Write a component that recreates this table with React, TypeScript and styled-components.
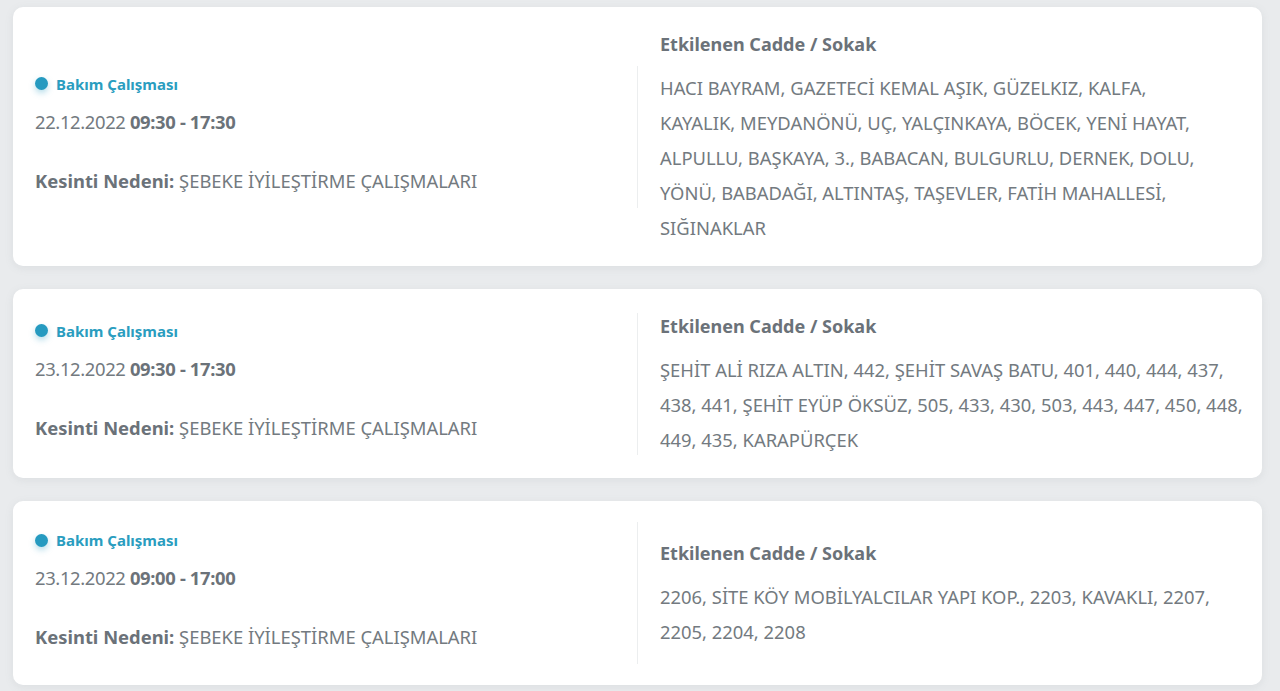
import React from "react";
import styled, { createGlobalStyle } from "styled-components";

const GlobalStyle = createGlobalStyle`
  html, body {
    margin: 0;
    padding: 0;
    background: #e9ebed;
  }
  body {
    font-family: "Noto Sans", "Open Sans", sans-serif;
    color: #737a80;
  }
`;

const Page = styled.div`
  display: flex;
  flex-direction: column;
  gap: 23px;
  padding: 7px 18px 10px 13px;
`;

const Card = styled.div`
  display: flex;
  align-items: center;
  background: #ffffff;
  border-radius: 10px;
  box-shadow: 0 2px 8px rgba(120, 130, 140, 0.12);
  padding: 21px 20px 21px 0;
`;

const Left = styled.div`
  width: 602px;
  flex-shrink: 0;
  padding: 8px 0 15px 22px;
  border-right: 1px solid #eceeef;
  display: flex;
  flex-direction: column;
`;

const Tag = styled.div`
  display: flex;
  align-items: center;
  gap: 8px;
  height: 20px;
  font-size: 15px;
  font-weight: 700;
  color: #2a9dbf;
  margin-bottom: 16px;
`;

const Dot = styled.span`
  width: 13px;
  height: 13px;
  border-radius: 50%;
  background: #259ac0;
  box-shadow: 0 3px 6px rgba(37, 154, 192, 0.35);
`;

const Strong = styled.b`
  font-weight: 700;
  color: #6b7279;
`;

const TextLine = styled.div<{ $gapAfter?: number; $tight?: boolean }>`
  font-size: 18.4px;
  line-height: 24px;
  color: #737a80;
  white-space: nowrap;
  letter-spacing: ${(p) => (p.$tight ? "-0.35px" : "0")};
  margin-bottom: ${(p) => p.$gapAfter ?? 0}px;
`;

const Right = styled.div`
  flex: 1;
  padding: 4px 0 0 22px;
  min-width: 0;
`;

const Title = styled.div`
  font-size: 18px;
  line-height: 24px;
  font-weight: 700;
  color: #6b7279;
  margin-bottom: 14px;
`;

const StreetLine = styled.div`
  font-size: 18.4px;
  line-height: 35px;
  color: #737a80;
  white-space: nowrap;
`;

type Outage = {
  date: string;
  time: string;
  streets: string[];
};

const outages: Outage[] = [
  {
    date: "22.12.2022",
    time: "09:30 - 17:30",
    streets: [
      "HACI BAYRAM, GAZETECİ KEMAL AŞIK, GÜZELKIZ, KALFA,",
      "KAYALIK, MEYDANÖNÜ, UÇ, YALÇINKAYA, BÖCEK, YENİ HAYAT,",
      "ALPULLU, BAŞKAYA, 3., BABACAN, BULGURLU, DERNEK, DOLU,",
      "YÖNÜ, BABADAĞI, ALTINTAŞ, TAŞEVLER, FATİH MAHALLESİ,",
      "SIĞINAKLAR",
    ],
  },
  {
    date: "23.12.2022",
    time: "09:30 - 17:30",
    streets: [
      "ŞEHİT ALİ RIZA ALTIN, 442, ŞEHİT SAVAŞ BATU, 401, 440, 444, 437,",
      "438, 441, ŞEHİT EYÜP ÖKSÜZ, 505, 433, 430, 503, 443, 447, 450, 448,",
      "449, 435, KARAPÜRÇEK",
    ],
  },
  {
    date: "23.12.2022",
    time: "09:00 - 17:00",
    streets: [
      "2206, SİTE KÖY MOBİLYALCILAR YAPI KOP., 2203, KAVAKLI, 2207,",
      "2205, 2204, 2208",
    ],
  },
];

export default function App() {
  return (
    <>
      <GlobalStyle />
      <Page>
        {outages.map((o, i) => (
          <Card key={i}>
            <Left>
              <Tag>
                <Dot />
                Bakım Çalışması
              </Tag>
              <TextLine $gapAfter={35} $tight>
                {o.date} <Strong>{o.time}</Strong>
              </TextLine>
              <TextLine>
                <Strong>Kesinti Nedeni:</Strong> ŞEBEKE İYİLEŞTİRME ÇALIŞMALARI
              </TextLine>
            </Left>
            <Right>
              <Title>Etkilenen Cadde / Sokak</Title>
              {o.streets.map((s, j) => (
                <StreetLine key={j}>{s}</StreetLine>
              ))}
            </Right>
          </Card>
        ))}
      </Page>
    </>
  );
}
